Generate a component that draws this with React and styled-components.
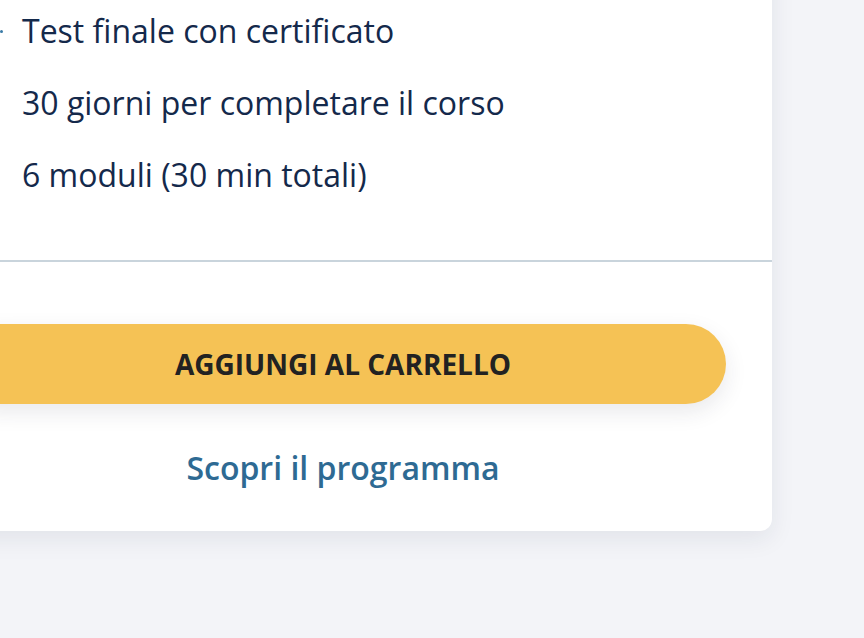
import styled, { createGlobalStyle } from "styled-components";

const GlobalStyle = createGlobalStyle`
  html, body {
    margin: 0;
    padding: 0;
    background: #f3f4f8;
    overflow: hidden;
  }
  body {
    font-family: "Open Sans", "Noto Sans", sans-serif;
  }
`;

const features = [
  { label: "Test finale con certificato", marker: true },
  { label: "30 giorni per completare il corso" },
  { label: "6 moduli (30 min totali)" },
];

export default function App() {
  return (
    <Page>
      <GlobalStyle />
      <Card>
        <FeatureList>
          {features.map((f, i) => (
            <Feature key={i}>
              <Marker visible={f.marker} />
              {f.label}
            </Feature>
          ))}
        </FeatureList>
        <Divider />
        <Actions>
          <CartButton>AGGIUNGI AL CARRELLO</CartButton>
          <ProgramLink href="#">Scopri il programma</ProgramLink>
        </Actions>
      </Card>
    </Page>
  );
}

const Page = styled.div`
  width: 864px;
  height: 638px;
  overflow: hidden;
  background: #f3f4f8;
`;

const Card = styled.div`
  margin-top: -40px;
  margin-left: -86px;
  width: 858px;
  background: #ffffff;
  border-radius: 12px;
  box-shadow: 0 8px 24px rgba(30, 40, 70, 0.08);
  padding-top: 51px;
  padding-bottom: 46px;
`;

const FeatureList = styled.ul`
  list-style: none;
  margin: 0;
  padding: 0 0 65px 108px;
  display: flex;
  flex-direction: column;
  gap: 32px;
`;

const Feature = styled.li`
  position: relative;
  font-size: 32px;
  line-height: 40px;
  color: #14294b;
`;

const Marker = styled.span`
  position: absolute;
  left: -22px;
  top: 19px;
  width: 3px;
  height: 3px;
  border-radius: 50%;
  background: #3a7aa6;
  display: ${(p) => (p.visible ? "block" : "none")};
`;

const Divider = styled.hr`
  margin: 0;
  border: none;
  height: 2px;
  background: #c9d4dc;
`;

const Actions = styled.div`
  display: flex;
  flex-direction: column;
  align-items: center;
  padding: 62px 46px 0;
  gap: 47px;
`;

const CartButton = styled.button`
  width: 100%;
  height: 80px;
  border: none;
  border-radius: 40px;
  background: #f5c255;
  box-shadow: 0 8px 22px rgba(40, 40, 60, 0.1);
  font-family: "Open Sans", "Noto Sans", sans-serif;
  font-weight: 700;
  font-size: 28px;
  color: #222222;
  cursor: pointer;
`;

const ProgramLink = styled.a`
  font-size: 32px;
  line-height: 34px;
  font-weight: 600;
  color: #2e6a93;
  text-decoration: none;
`;
